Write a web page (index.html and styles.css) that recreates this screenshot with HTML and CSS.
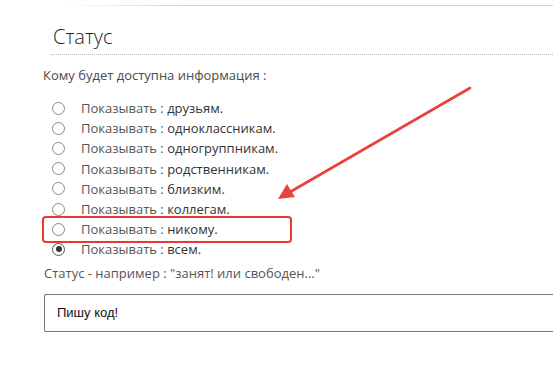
FILE: index.html
```html
<!DOCTYPE html>
<html lang="ru">
<head>
<meta charset="utf-8">
<link rel="stylesheet" href="styles.css">
</head>
<body>
<div class="page">
  <div class="rule rule-top"></div>
  <div class="content">
    <h2 class="title">Статус</h2>
    <p class="question">Кому будет доступна информация :</p>
    <ul class="options">
      <li class="opt"><span class="radio"></span><span class="lbl">Показывать : </span><span class="val">друзьям.</span></li>
      <li class="opt"><span class="radio"></span><span class="lbl">Показывать : </span><span class="val">одноклассникам.</span></li>
      <li class="opt"><span class="radio"></span><span class="lbl">Показывать : </span><span class="val">одногруппникам.</span></li>
      <li class="opt"><span class="radio"></span><span class="lbl">Показывать : </span><span class="val">родственникам.</span></li>
      <li class="opt"><span class="radio"></span><span class="lbl">Показывать : </span><span class="val">близким.</span></li>
      <li class="opt"><span class="radio"></span><span class="lbl">Показывать : </span><span class="val">коллегам.</span></li>
      <li class="opt"><span class="radio"></span><span class="lbl">Показывать : </span><span class="val">никому.</span></li>
      <li class="opt"><span class="radio checked"></span><span class="lbl">Показывать : </span><span class="val">всем.</span></li>
    </ul>
    <p class="hint">Статус - например : "занят! или свободен..."</p>
    <div class="input">Пишу код!</div>
  </div>
  <div class="rule rule-bottom"></div>
  <div class="highlight"></div>
  <svg class="arrow" width="553" height="370" viewBox="0 0 553 370">
    <line x1="470" y1="88" x2="290" y2="192" stroke="#e8433b" stroke-width="2.6" stroke-linecap="round"/>
    <polygon points="278,199 287,184 295,197" fill="#e8433b"/>
  </svg>
</div>
</body>
</html>
```
FILE: styles.css
```css
html, body {
  margin: 0;
  padding: 0;
  background: #fff;
}
.page {
  position: relative;
  width: 553px;
  height: 370px;
  overflow: hidden;
  font-family: "Open Sans", "DejaVu Sans", sans-serif;
  color: #444;
}
.rule {
  height: 1px;
  margin-left: 60px;
}
.rule-top {
  margin-top: 5px;
  background: linear-gradient(to right, rgba(200,200,200,0), #d4d4d4 25%, #d0d0d0);
}
.rule-bottom {
  margin-left: 45px;
  background: linear-gradient(to right, rgba(200,200,200,0), #e6e6e6 30%, #cfcfcf);
}
.content {
  padding: 0 0 0 43px;
  height: 358px;
  box-sizing: border-box;
}
.title {
  margin: 18px 0 0 8px;
  padding: 0 0 4px 2px;
  font-size: 20px;
  font-weight: 300;
  color: #222;
  line-height: 26px;
  border-bottom: 1px dotted #b8b8b8;
}
.question {
  margin: 11px 0 0 0;
  font-size: 13px;
  line-height: 18px;
  color: #4a4a4a;
}
.options {
  list-style: none;
  margin: 14px 0 0 0;
  padding: 0;
}
.opt {
  display: flex;
  align-items: center;
  height: 20.2px;
  font-size: 13px;
  line-height: 20px;
}
.radio {
  width: 11px;
  height: 11px;
  border: 1.3px solid #888;
  border-radius: 50%;
  margin: 0 16px 0 9px;
  box-sizing: content-box;
  position: relative;
  flex: none;
}
.radio.checked {
  border-color: #555;
}
.radio.checked::after {
  content: "";
  position: absolute;
  left: 2.5px;
  top: 2.5px;
  width: 6px;
  height: 6px;
  border-radius: 50%;
  background: #333;
}
.lbl {
  color: #555;
  white-space: pre;
}
.val {
  color: #333;
}
.hint {
  margin: 4px 0 0 1px;
  font-size: 13px;
  line-height: 18px;
  color: #555;
}
.input {
  margin: 12px 0 0 1px;
  height: 38px;
  border: 1px solid #777;
  border-right: none;
  border-radius: 2px 0 0 2px;
  box-sizing: border-box;
  padding-left: 12px;
  display: flex;
  align-items: center;
  font-family: "Liberation Sans", Arial, sans-serif;
  font-size: 13px;
  font-weight: 500;
  color: #111;
}
.highlight {
  position: absolute;
  left: 42px;
  top: 216px;
  width: 250px;
  height: 27px;
  box-sizing: border-box;
  border: 2.4px solid #e33b36;
  border-radius: 4px;
}
.arrow {
  position: absolute;
  left: 0;
  top: 0;
}
```
